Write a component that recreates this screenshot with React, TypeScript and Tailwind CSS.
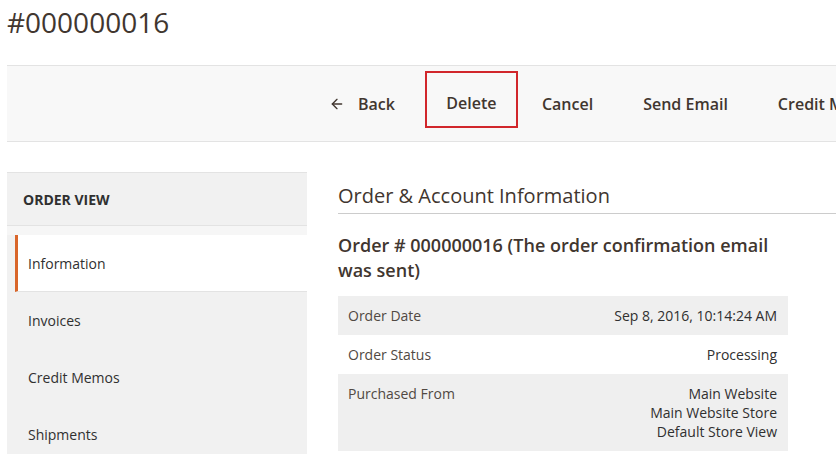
import { ArrowLeft } from "lucide-react"

const tabs = ["Information", "Invoices", "Credit Memos", "Shipments"]

const rows: { label: string; value: string[]; shaded: boolean }[] = [
    { label: "Order Date", value: ["Sep 8, 2016, 10:14:24 AM"], shaded: true },
    { label: "Order Status", value: ["Processing"], shaded: false },
    { label: "Purchased From", value: ["Main Website", "Main Website Store", "Default Store View"], shaded: true },
]

export default function App() {
    return (
        <div className="w-[836px] h-[454px] overflow-hidden bg-white text-[#41362f]" style={{ fontFamily: '"Open Sans", "Liberation Sans", sans-serif' }}>
            <h1 className="pl-[7px] pt-[2px] h-[65px] text-[28px] leading-[40px] font-normal text-[#41362f]">#000000016</h1>

            {/* page actions */}
            <div className="ml-[7px] h-[77px] bg-[#f8f8f8] border-y border-[#e3e3e3] flex items-center pl-[322px] whitespace-nowrap overflow-hidden">
                <button className="shrink-0 flex items-center gap-[13px] text-[16px] font-semibold text-[#41362f] mr-[30px]">
                    <ArrowLeft size={16} strokeWidth={2} className="text-[#41362f]" />
                    Back
                </button>
                <button className="shrink-0 self-start mt-[5px] h-[57px] w-[93px] pt-[6px] border-2 border-[#d1262b] text-[16px] font-semibold text-[#41362f] mr-[24px]">Delete</button>
                <button className="shrink-0 text-[16px] font-semibold text-[#41362f] mr-[50px]">Cancel</button>
                <button className="shrink-0 text-[16px] font-semibold text-[#41362f] mr-[50px]">Send Email</button>
                <button className="shrink-0 text-[16px] font-semibold text-[#41362f]">Credit Memo</button>
            </div>

            <div className="flex mt-[30px]">
                {/* sidebar */}
                <div className="ml-[7px] w-[300px] shrink-0 bg-[#f1f1f1] border-t border-[#e3e3e3]">
                    <div className="h-[53px] flex items-center pl-[16px] border-b border-[#e3e3e3] text-[14px] font-bold uppercase text-[#303030]">Order View</div>
                    <div className="h-[9px] bg-[#f6f6f6]" />
                    <ul className="pl-[8px]">
                        {tabs.map((t, i) => (
                            <li
                                key={t}
                                className={`h-[57px] flex items-center text-[14px] ${i === 0 ? "bg-white border-l-[3px] border-[#d9662a] pl-[10px] border-b border-b-[#e3e3e3] text-[#303030]" : "pl-[13px] text-[#303030]"}`}
                            >
                                {t}
                            </li>
                        ))}
                    </ul>
                </div>

                {/* main */}
                <div className="ml-[31px] flex-1">
                    <div className="border-b border-[#cccccc] h-[42px] flex items-end pb-[3px]">
                        <h2 className="text-[20px] font-normal text-[#41362f] leading-[28px]">Order &amp; Account Information</h2>
                    </div>
                    <div className="w-[450px]">
                        <h3 className="mt-[19px] text-[18px] font-semibold leading-[25px] text-[#41362f]">Order # 000000016 (The order confirmation email was sent)</h3>
                        <table className="mt-[13px] w-full text-[14px] leading-[19px]">
                            <tbody>
                                {rows.map(r => (
                                    <tr key={r.label} className={r.shaded ? "bg-[#efefef]" : "bg-white"}>
                                        <th className="text-left font-normal align-top pl-[10px] py-[10px] text-[#514943]">{r.label}</th>
                                        <td className="text-right align-top pr-[11px] py-[10px] text-[#303030]">
                                            {r.value.map(v => <div key={v}>{v}</div>)}
                                        </td>
                                    </tr>
                                ))}
                            </tbody>
                        </table>
                    </div>
                </div>
            </div>
        </div>
    )
}
